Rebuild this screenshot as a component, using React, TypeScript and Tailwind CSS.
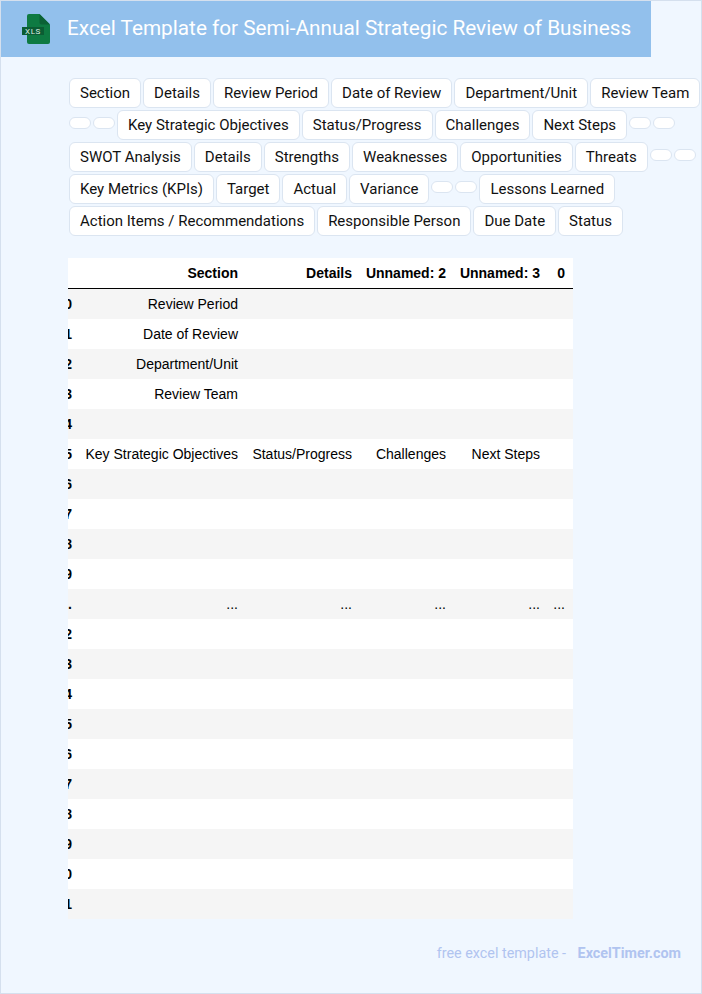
const tags = [
  "Section", "Details", "Review Period", "Date of Review", "Department/Unit", "Review Team", "", "",
  "Key Strategic Objectives", "Status/Progress", "Challenges", "Next Steps", "", "",
  "SWOT Analysis", "Details", "Strengths", "Weaknesses", "Opportunities", "Threats", "", "",
  "Key Metrics (KPIs)", "Target", "Actual", "Variance", "", "", "Lessons Learned",
  "Action Items / Recommendations", "Responsible Person", "Due Date", "Status",
];

const rows = [
  ["0", "Review Period", "", "", "", ""],
  ["1", "Date of Review", "", "", "", ""],
  ["2", "Department/Unit", "", "", "", ""],
  ["3", "Review Team", "", "", "", ""],
  ["4", "", "", "", "", ""],
  ["5", "Key Strategic Objectives", "Status/Progress", "Challenges", "Next Steps", ""],
  ["6", "", "", "", "", ""],
  ["7", "", "", "", "", ""],
  ["8", "", "", "", "", ""],
  ["9", "", "", "", "", ""],
  ["...", "...", "...", "...", "...", "..."],
  ["12", "", "", "", "", ""],
  ["13", "", "", "", "", ""],
  ["14", "", "", "", "", ""],
  ["15", "", "", "", "", ""],
  ["16", "", "", "", "", ""],
  ["17", "", "", "", "", ""],
  ["18", "", "", "", "", ""],
  ["19", "", "", "", "", ""],
  ["20", "", "", "", "", ""],
  ["21", "", "", "", "", ""],
];

function XlsIcon() {
  return (
    <svg width="32" height="32" viewBox="0 0 32 32" className="shrink-0">
      <path d="M9 1h10.500L30 11.500V29a2 2 0 0 1-2 2H9a2 2 0 0 1-2-2V3a2 2 0 0 1 2-2z" fill="#0e7a42" />
      <path d="M19.500 1L30 11.500h-8.500a2 2 0 0 1-2-2z" fill="#0b6135" />
      <rect x="2" y="14" width="22" height="8" fill="#0b5c33" />
      <text x="13" y="21" textAnchor="middle" fontSize="8" fontFamily="Roboto, sans-serif" fill="#dfeee6" letterSpacing="0.6">
        XLS
      </text>
    </svg>
  );
}

export default function App() {
  return (
    <div className="w-[702px] h-[994px] border border-[#d5e0ee] bg-[#f0f7ff] font-['Roboto',sans-serif] flex flex-col">
      <header className="w-[650px] h-14 bg-[#92c0ec] flex items-center pl-[19px] gap-[15px]">
        <XlsIcon />
        <h1 className="text-white text-[20.76px] leading-none font-normal whitespace-nowrap -translate-y-px">
          Excel Template for Semi-Annual Strategic Review of Business
        </h1>
      </header>

      <div className="mt-5 ml-[67px] w-[634px] text-[15px] leading-[18px] text-[#111]">
        {tags.map((tag, i) => (
          <span key={i} className="inline-block m-px px-2.5 py-[5px] bg-white border border-[#dbe5f1] rounded-md whitespace-nowrap">
            {tag}
          </span>
        ))}
      </div>

      <div className="mt-[21px] ml-[67px] w-[505px] overflow-hidden">
        <table className="table-fixed w-[534px] -ml-[29px] bg-white border-separate border-spacing-0 font-['Liberation_Sans',Arial,sans-serif] text-sm text-black text-right">
          <colgroup>
            <col className="w-10" />
            <col className="w-[167px]" />
            <col className="w-[114px]" />
            <col className="w-[94px]" />
            <col className="w-[94px]" />
            <col className="w-[25px]" />
          </colgroup>
          <thead>
            <tr className="font-bold">
              <th className="h-[31px] border-b border-black pr-2"></th>
              <th className="h-[31px] border-b border-black pr-2">Section</th>
              <th className="h-[31px] border-b border-black pr-2">Details</th>
              <th className="h-[31px] border-b border-black pr-2 whitespace-nowrap">Unnamed: 2</th>
              <th className="h-[31px] border-b border-black pr-2 whitespace-nowrap">Unnamed: 3</th>
              <th className="h-[31px] border-b border-black pr-2">0</th>
            </tr>
          </thead>
          <tbody>
            {rows.map((row, i) => (
              <tr key={i} className={i % 2 === 0 ? "h-[30px] bg-[#f5f5f5]" : "h-[30px] bg-white"}>
                {row.map((cell, j) => (
                  <td key={j} className={j === 0 ? "pr-[7px] font-bold whitespace-nowrap" : "pr-2 whitespace-nowrap"}>
                    {cell}
                  </td>
                ))}
              </tr>
            ))}
          </tbody>
        </table>
      </div>

      <footer className="mt-[25px] mr-5 text-right text-[14.35px] leading-5 text-[#b0c4f0]">
        free excel template - <a className="ml-2 font-bold">ExcelTimer.com</a>
      </footer>
    </div>
  );
}
